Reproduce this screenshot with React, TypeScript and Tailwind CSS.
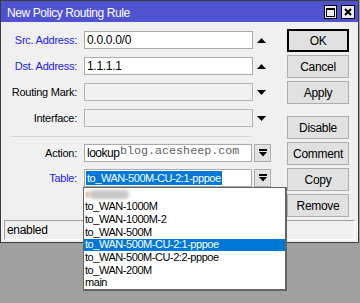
import React from 'react';

const UpArrow = () => (
  <svg width="9" height="5" viewBox="0 0 9 5">
    <polygon points="0,5 9,5 4.5,0" fill="#000" />
  </svg>
);

const DownArrow = () => (
  <svg width="9" height="5" viewBox="0 0 9 5">
    <polygon points="0,0 9,0 4.5,5" fill="#000" />
  </svg>
);

const DropButton = () => (
  <div className="ml-[2px] w-[17px] h-[18px] bg-[#e1e1e1] border border-[#adadad] flex items-center justify-center">
    <svg width="8" height="8" viewBox="0 0 8 8">
      <rect x="0" y="0" width="8" height="2" fill="#000" />
      <polygon points="0,3 8,3 4,7.5" fill="#000" />
    </svg>
  </div>
);

const Label = ({ text, blue }: { text: string; blue?: boolean }) => (
  <div className={`w-[77px] pr-[1px] text-right tracking-[-0.25px] ${blue ? 'text-[#2020e0]' : 'text-black'}`}>
    {text}
  </div>
);

const Btn = ({ text, def }: { text: string; def?: boolean }) => (
  <div
    className={`w-[62px] h-[23px] flex items-center justify-center bg-[#e1e1e1] text-[12px] tracking-[-0.3px] text-black ${
      def ? 'border-2 border-black' : 'border border-[#adadad]'
    }`}
  >
    {text}
  </div>
);

const listItems = [
  'to_WAN-1000M',
  'to_WAN-1000M-2',
  'to_WAN-500M',
  'to_WAN-500M-CU-2:1-pppoe',
  'to_WAN-500M-CU-2:2-pppoe',
  'to_WAN-200M',
  'main'
];

export default function App() {
  return (
    <div className="relative w-[360px] h-[303px] bg-[#a0a0a0] font-['Liberation_Sans',Arial,sans-serif] text-[11px] leading-none select-none">
      <div className="w-[359px] h-[243px] border border-[#3c3c3c] bg-[#f0f0f0] flex flex-col">
        {/* title bar */}
        <div className="h-[21px] bg-[#4f53d2] flex items-center pl-[6px] pr-[3px] pt-[2px]">
          <span className="text-white text-[12px] tracking-[-0.4px] flex-1">New Policy Routing Rule</span>
          <div className="flex gap-[4px] -mt-[1px]">
            <div className="w-[13px] h-[14px] bg-[#ececec] border border-black flex items-center justify-center">
              <div className="w-[9px] h-[9px] border border-black border-t-2" />
            </div>
            <div className="w-[14px] h-[14px] bg-[#ececec] border border-black flex items-center justify-center">
              <svg width="8" height="8" viewBox="0 0 8 8">
                <path d="M1 1 L7 7 M7 1 L1 7" stroke="#000" strokeWidth="2" />
              </svg>
            </div>
          </div>
        </div>

        {/* body */}
        <div className="flex flex-1">
          <div className="w-[270px] pt-[9px] flex flex-col">
            <div className="flex items-center h-[18px]">
              <Label text="Src. Address:" blue />
              <div className="ml-[6px] w-[169px] h-[18px] bg-white border border-[#a9a9a9] flex items-center pl-[2px] text-[12px] tracking-[-0.3px]">0.0.0.0/0</div>
              <div className="w-[17px] flex justify-center"><UpArrow /></div>
            </div>
            <div className="flex items-center h-[18px] mt-[8px]">
              <Label text="Dst. Address:" blue />
              <div className="ml-[6px] w-[169px] h-[18px] bg-white border border-[#a9a9a9] flex items-center pl-[2px] text-[12px] tracking-[-0.3px]">1.1.1.1</div>
              <div className="w-[17px] flex justify-center"><UpArrow /></div>
            </div>
            <div className="flex items-center h-[18px] mt-[8px]">
              <Label text="Routing Mark:" />
              <div className="ml-[6px] w-[169px] h-[18px] bg-[#f0f0f0] border border-[#b4b4b4]" />
              <div className="w-[17px] flex justify-center"><DownArrow /></div>
            </div>
            <div className="flex items-center h-[18px] mt-[8px]">
              <Label text="Interface:" />
              <div className="ml-[6px] w-[169px] h-[18px] bg-[#f0f0f0] border border-[#b4b4b4]" />
              <div className="w-[17px] flex justify-center"><DownArrow /></div>
            </div>
            <div className="mt-[9px] ml-[10px] w-[240px] h-[1px] bg-[#d5d5d5]" />
            <div className="flex items-center h-[18px] mt-[7px]">
              <Label text="Action:" />
              <div className="relative ml-[6px] w-[168px] h-[18px] bg-white border border-[#a9a9a9] flex items-center pl-[2px] text-[12px] tracking-[-0.5px]">
                lookup
                <span className="absolute left-[35px] top-[1px] font-['Liberation_Mono',monospace] text-[11.7px] text-[#606060] tracking-normal">
                  blog.acesheep.com
                </span>
              </div>
              <DropButton />
            </div>
            <div className="flex items-center h-[18px] mt-[7px]">
              <Label text="Table:" blue />
              <div className="ml-[6px] w-[168px] h-[18px] bg-white border border-[#a9a9a9] flex items-center justify-start pl-[1px]">
                <span className="bg-[#0078d7] text-white leading-[14px] px-[1px] text-[11px] tracking-[-0.45px] whitespace-nowrap">to_WAN-500M-CU-2:1-pppoe</span>
              </div>
              <DropButton />
            </div>
          </div>

          <div className="ml-[16px] pt-[7px] flex flex-col gap-[3px]">
            <Btn text="OK" def />
            <Btn text="Cancel" />
            <Btn text="Apply" />
            <div className="h-[6px]" />
            <Btn text="Disable" />
            <Btn text="Comment" />
            <Btn text="Copy" />
            <Btn text="Remove" />
          </div>
        </div>

        {/* status bar */}
        <div className="flex gap-[2px] mx-[3px] mb-[2px] h-[20px]">
          <div className="w-[200px] border border-t-[#a0a0a0] border-l-[#a0a0a0] border-b-white border-r-white flex items-center pl-[2px] text-[12px] tracking-[-0.3px]">
            enabled
          </div>
          <div className="flex-1 border border-t-[#a0a0a0] border-l-[#a0a0a0] border-b-white border-r-white" />
        </div>
      </div>

      {/* dropdown list */}
      <div className="absolute left-[83px] top-[187px] w-[204px] h-[104px] bg-white border border-[#646464] border-r-2 border-b-2 flex flex-col text-[11px] tracking-[-0.45px]">
        <div className="h-[13px] flex items-center pl-[2px]">
          <div className="w-[3px] h-[7px] bg-[#e0b080] rounded-full blur-[1px]" />
          <div className="w-[40px] h-[9px] bg-[#c8c8c8] rounded-full blur-[1.5px]" />
        </div>
        {listItems.map((item, i) => (
          <div
            key={item}
            className={`h-[13px] flex items-center pl-[1px] ${i === 3 ? 'bg-[#0078d7] text-white' : 'text-black'}`}
          >
            {item}
          </div>
        ))}
      </div>
    </div>
  );
}
